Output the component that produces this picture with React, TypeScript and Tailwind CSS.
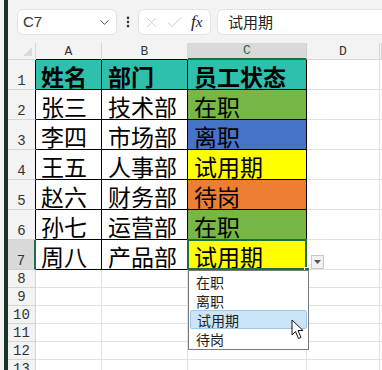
import React from "react";
import { ChevronDown, EllipsisVertical, X, Check } from "lucide-react";

const CJK = "font-['Noto_Sans_CJK_SC',sans-serif]";

const TABLE = [
  ["姓名", "部门", "员工状态"],
  ["张三", "技术部", "在职"],
  ["李四", "市场部", "离职"],
  ["王五", "人事部", "试用期"],
  ["赵六", "财务部", "待岗"],
  ["孙七", "运营部", "在职"],
  ["周八", "产品部", "试用期"],
];

const STATUS_BG: Record<string, string> = {
  员工状态: "bg-[#2fbfad]",
  在职: "bg-[#77b746]",
  离职: "bg-[#4673c8]",
  试用期: "bg-[#ffff00]",
  待岗: "bg-[#ee7e32]",
};

const OPTIONS = ["在职", "离职", "试用期", "待岗"];

const Cursor = () => (
  <svg width="14" height="21" viewBox="0 0 14 21" className="absolute left-[102px] top-[48px]">
    <path
      d="M1 1 L1 16 L4.5 12.5 L7.5 19.5 L10 18.5 L7 11.5 L12 11.5 Z"
      fill="white"
      stroke="#111"
      strokeWidth="1"
      strokeLinejoin="round"
    />
  </svg>
);

const DataCell = ({ text, col, row }: { text: string; col: number; row: number }) => {
  const header = row === 1;
  let bg = "bg-white";
  if (col === 0 && header) bg = "bg-[#2fbfad]";
  if (col === 1 && header) bg = "bg-[#2fbfad]";
  if (col === 2) bg = STATUS_BG[text];
  const selected = row === 7 && col === 2;

  return (
    <div
      className={`relative flex items-end pb-[1px] border-r border-b border-black ${bg} ${
        col === 0 ? "pl-[5px]" : "pl-[6px]"
      }`}
    >
      <span
        className={`${CJK} text-[23px] leading-none text-black whitespace-nowrap ${
          header ? "font-bold" : ""
        }`}
      >
        {text}
      </span>
      {selected && (
        <>
          <div className="absolute -left-[1px] -top-[1px] -right-[1px] -bottom-[1px] border-2 border-[#1e6e45] pointer-events-none" />
          <div className="absolute -right-[4px] -bottom-[4px] w-[6px] h-[6px] bg-[#1e6e45] border border-white" />
          <div className="absolute left-[123px] top-[15px] w-[13px] h-[14px] bg-[#f0f0f0] border border-[#c8c8c8] flex items-center justify-center">
            <svg width="7" height="4" viewBox="0 0 7 4">
              <path d="M0 0 L7 0 L3.5 4 Z" fill="#555" />
            </svg>
          </div>
          <div className="absolute left-0 top-[30px] w-[121px] bg-white border border-[#7a7a7a] py-[1px] z-10">
            {OPTIONS.map((o) => (
              <div
                key={o}
                className={`h-[19px] flex items-center ${
                  o === "试用期"
                    ? "bg-[#cce4f7] border border-[#9cc8ec] rounded-[2px] mx-[1px] pl-[6px]"
                    : "pl-[7px]"
                }`}
              >
                <span className={`${CJK} text-[14px] leading-none text-[#222]`}>{o}</span>
              </div>
            ))}
            <Cursor />
          </div>
        </>
      )}
    </div>
  );
};

export default function App() {
  const colLetters = ["A", "B", "C", "D", ""];
  const extraRows = [8, 9, 10, 11, 12, 13];

  return (
    <div className="w-[382px] h-[370px] bg-[#f3f3f3] flex overflow-hidden">
      <div className="w-[4px] shrink-0" />
      <div className="w-[4px] shrink-0 bg-[#1c3328]" />
      <div className="flex-1 flex flex-col min-w-0">
        <div className="h-[2px] ml-[9px] bg-white rounded-b-[6px]" />

        <div className="mt-[9px] h-[26px] flex items-stretch">
          <div className="ml-[9px] w-[100px] bg-white border border-[#e3e3e3] rounded-[6px] flex items-center justify-between pl-[5px] pr-[4px]">
            <span className="font-['Liberation_Sans',sans-serif] text-[15px] text-[#333]">C7</span>
            <ChevronDown size={15} strokeWidth={1.5} className="text-[#444]" />
          </div>
          <div className="w-[21px] flex items-center justify-center">
            <EllipsisVertical size={14} strokeWidth={2.5} className="text-[#333]" />
          </div>
          <div className="w-[73px] bg-white border border-[#e3e3e3] rounded-[6px] flex items-center pl-[4px] gap-[5px]">
            <X size={17} strokeWidth={1.1} className="text-[#c2c2c2]" />
            <Check size={19} strokeWidth={1.1} className="text-[#c2c2c2]" />
            <span className="font-['Liberation_Serif',serif] italic text-[17px] text-[#222] ml-[2px]">
              f<span className="text-[15px]">x</span>
            </span>
          </div>
          <div className="ml-[6px] flex-1 bg-white border border-[#e3e3e3] border-r-0 rounded-l-[6px] flex items-center pl-[10px]">
            <span className={`${CJK} text-[15px] text-[#222]`}>试用期</span>
          </div>
        </div>

        <div className="mt-[8px] grid grid-cols-[28px_66px_86px_119px_73px_1fr] grid-rows-[17px_repeat(7,30px)_repeat(6,18px)] bg-white">
          {/* header row */}
          <div className="relative bg-[#f3f3f3] border-r border-b border-[#d6d6d6]">
            <svg width="9" height="9" viewBox="0 0 9 9" className="absolute right-[3px] bottom-[3px]">
              <path d="M9 0 L9 9 L0 9 Z" fill="#dadada" />
            </svg>
          </div>
          {colLetters.map((l, i) => (
            <div
              key={i}
              className={`flex items-center justify-center font-['Liberation_Mono',monospace] text-[13px] leading-none border-r ${
                l === "C"
                  ? "bg-[#d9d9d9] text-[#1e6e45] border-b-2 border-b-[#1e6e45] border-r-[#d0d0d0]"
                  : l === "A" || l === "B"
                  ? "bg-[#f3f3f3] text-[#333] border-b border-b-black border-r-[#d6d6d6]"
                  : "bg-[#f3f3f3] text-[#333] border-b border-[#d6d6d6]"
              }`}
            >
              {l}
            </div>
          ))}

          {/* table rows */}
          {TABLE.map((r, ri) => {
            const n = ri + 1;
            return (
              <React.Fragment key={n}>
                <div
                  className={`flex items-end justify-center pb-[1px] font-['Liberation_Mono',monospace] text-[14px] leading-none text-[#333] border-b ${
                    n === 7
                      ? "bg-[#d9d9d9] border-r-2 border-r-[#1e6e45] border-b-[#d0d0d0]"
                      : "bg-[#f3f3f3] border-r border-r-black border-b-[#d6d6d6]"
                  }`}
                >
                  {n}
                </div>
                {r.map((t, ci) => (
                  <DataCell key={ci} text={t} col={ci} row={n} />
                ))}
                <div className="border-r border-b border-[#e1e1e1]" />
                <div className="border-b border-[#e1e1e1]" />
              </React.Fragment>
            );
          })}

          {/* empty rows */}
          {extraRows.map((n) => (
            <React.Fragment key={n}>
              <div className="flex items-end justify-center pb-[1px] font-['Liberation_Mono',monospace] text-[14px] leading-none text-[#333] bg-[#f3f3f3] border-r border-b border-[#d6d6d6]">
                {n}
              </div>
              <div className="border-r border-b border-[#e1e1e1]" />
              <div className="border-r border-b border-[#e1e1e1]" />
              <div className="border-r border-b border-[#e1e1e1]" />
              <div className="border-r border-b border-[#e1e1e1]" />
              <div className="border-b border-[#e1e1e1]" />
            </React.Fragment>
          ))}
        </div>
      </div>
    </div>
  );
}
